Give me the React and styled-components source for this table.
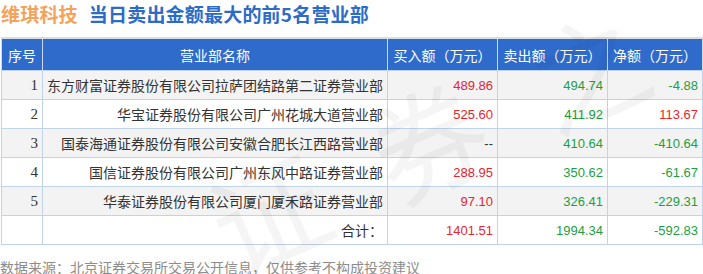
import React from "react";
import styled, { createGlobalStyle } from "styled-components";

const Global = createGlobalStyle`
  html, body { margin: 0; padding: 0; background: #fff; }
  body { font-family: "Noto Sans CJK SC", "Liberation Sans", sans-serif; }
`;

const Page = styled.div`
  position: relative;
  width: 703px;
  height: 274px;
  overflow: hidden;
`;

const TitleBar = styled.div`
  display: flex;
  align-items: center;
  gap: 11px;
  height: 27px;
  padding-left: 1px;
  margin-bottom: 10px;
  font-family: "Noto Sans CJK SC", sans-serif;
  font-weight: 700;
  font-size: 19px;
  line-height: 27px;
  letter-spacing: 0.2px;
`;

const Stock = styled.span`
  color: #f7a25b;
`;

const Headline = styled.span`
  color: #2c6cc6;
`;

const Table = styled.table`
  margin-left: 1px;
  width: 701px;
  border-collapse: collapse;
  table-layout: fixed;
  border-top: 2px solid #dcdcdc;
`;

const HeadCell = styled.th`
  height: 31px;
  padding: 0;
  background: #2f6bcb;
  color: #fff;
  font-family: "Noto Sans CJK SC", sans-serif;
  font-weight: 400;
  font-size: 14px;
  text-align: center;
  border-left: 1px solid #c9d9ef;
  border-right: 1px solid #c9d9ef;
`;

const Row = styled.tr`
  background: ${(p) => (p.$shade ? "#f3f3f3" : "#ffffff")};
`;

const Cell = styled.td`
  height: 28px;
  padding: 0 4px 0 0;
  border: 1px solid #bfd4ea;
  text-align: right;
  font-size: ${(p) => (p.$serif ? "15px" : p.$cn ? "14px" : "13px")};
  font-family: ${(p) =>
    p.$serif
      ? `"Liberation Serif", serif`
      : p.$cn
      ? `"Noto Sans CJK SC", sans-serif`
      : `"Liberation Sans", sans-serif`};
  color: ${(p) => p.$color || "#333"};
  white-space: nowrap;
  overflow: hidden;
`;

const Footer = styled.div`
  margin-top: 12px;
  font-family: "Noto Sans CJK SC", sans-serif;
  font-size: 14px;
  color: #8c8c8c;
  line-height: 20px;
`;

const Watermark = styled.div`
  position: absolute;
  left: 215px;
  top: 175px;
  font-family: "Noto Sans CJK SC", sans-serif;
  font-size: 115px;
  line-height: 115px;
  font-weight: 400;
  color: rgba(0, 0, 0, 0.04);
  transform: rotate(-24deg);
  transform-origin: left center;
  white-space: nowrap;
  pointer-events: none;
  letter-spacing: 60px;
`;

const RED = "#e8242f";
const GREEN = "#1c9f3f";
const DARK = "#333";

const rows = [
  ["1", "东方财富证券股份有限公司拉萨团结路第二证券营业部", "489.86", "494.74", "-4.88"],
  ["2", "华宝证券股份有限公司广州花城大道营业部", "525.60", "411.92", "113.67"],
  ["3", "国泰海通证券股份有限公司安徽合肥长江西路营业部", "--", "410.64", "-410.64"],
  ["4", "国信证券股份有限公司广州东风中路证券营业部", "288.95", "350.62", "-61.67"],
  ["5", "华泰证券股份有限公司厦门厦禾路证券营业部", "97.10", "326.41", "-229.31"],
];

const netColor = (v) => (v.startsWith("-") ? GREEN : RED);

export default function App() {
  return (
    <Page>
      <Global />
      <TitleBar>
        <Stock>维琪科技</Stock>
        <Headline>当日卖出金额最大的前5名营业部</Headline>
      </TitleBar>
      <Table>
        <colgroup>
          <col style={{ width: 41 }} />
          <col style={{ width: 345 }} />
          <col style={{ width: 110 }} />
          <col style={{ width: 110 }} />
          <col style={{ width: 95 }} />
        </colgroup>
        <thead>
          <tr>
            <HeadCell>序号</HeadCell>
            <HeadCell>营业部名称</HeadCell>
            <HeadCell>买入额（万元）</HeadCell>
            <HeadCell>卖出额（万元）</HeadCell>
            <HeadCell>净额（万元）</HeadCell>
          </tr>
        </thead>
        <tbody>
          {rows.map((r, i) => (
            <Row key={r[0]} $shade={i % 2 === 0}>
              <Cell $serif>{r[0]}</Cell>
              <Cell $cn>{r[1]}</Cell>
              <Cell $color={r[2] === "--" ? DARK : RED}>{r[2]}</Cell>
              <Cell $color={GREEN}>{r[3]}</Cell>
              <Cell $color={netColor(r[4])}>{r[4]}</Cell>
            </Row>
          ))}
          <Row>
            <Cell />
            <Cell $cn>合计：</Cell>
            <Cell $color={RED}>1401.51</Cell>
            <Cell $color={GREEN}>1994.34</Cell>
            <Cell $color={GREEN}>-592.83</Cell>
          </Row>
        </tbody>
      </Table>
      <Footer>数据来源：北京证券交易所交易公开信息，仅供参考不构成投资建议</Footer>
      <Watermark>证券之星</Watermark>
    </Page>
  );
}
